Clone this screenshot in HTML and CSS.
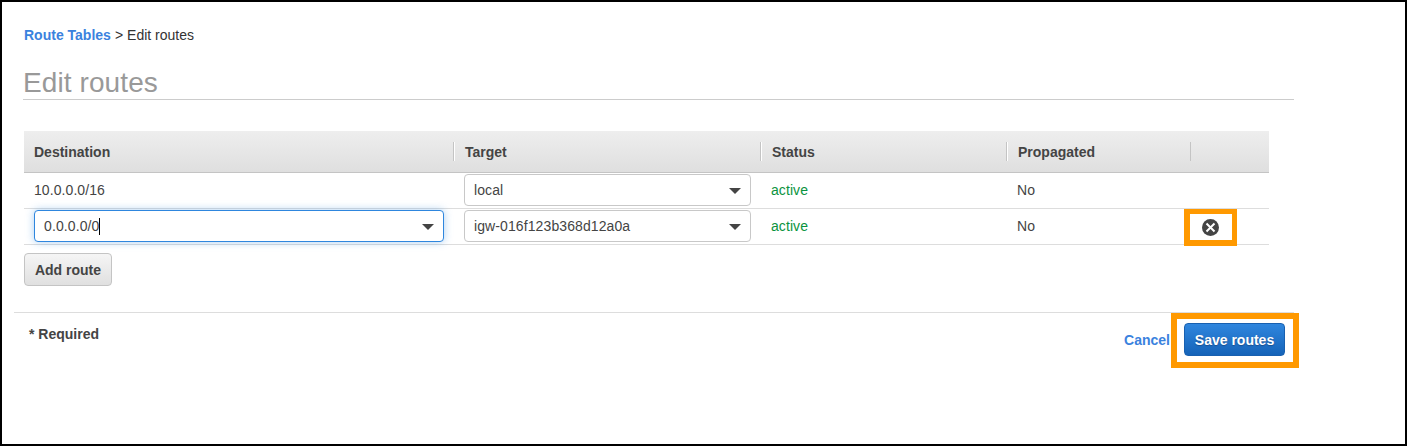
FILE: index.html
```html
<!DOCTYPE html>
<html lang="en">
<head>
<meta charset="utf-8">
<title>Edit routes</title>
<link rel="stylesheet" href="styles.css">
</head>
<body>
<main class="page">
  <nav class="breadcrumb"><a class="link crumb-link">Route Tables</a><span class="crumb-sep">&gt;</span><span class="crumb-current">Edit routes</span></nav>
  <h1 class="title"><span class="title-text">Edit routes</span></h1>
  <section class="routes">
    <div class="row head">
      <div class="cell"><span>Destination</span></div>
      <div class="cell split"><span>Target</span></div>
      <div class="cell split"><span>Status</span></div>
      <div class="cell split"><span>Propagated</span></div>
      <div class="cell split last"></div>
    </div>
    <div class="row">
      <div class="cell value"><span>10.0.0.0/16</span></div>
      <div class="cell"><div class="select"><span>local</span><svg class="caret" viewBox="0 0 12 6"><path d="M0 0h12L6 6z"/></svg></div></div>
      <div class="cell value active"><span>active</span></div>
      <div class="cell value"><span>No</span></div>
      <div class="cell"></div>
    </div>
    <div class="row">
      <div class="cell"><div class="select focused"><span class="typed">0.0.0.0/0</span><svg class="caret" viewBox="0 0 12 6"><path d="M0 0h12L6 6z"/></svg></div></div>
      <div class="cell"><div class="select"><span>igw-016f123b368d12a0a</span><svg class="caret" viewBox="0 0 12 6"><path d="M0 0h12L6 6z"/></svg></div></div>
      <div class="cell value active"><span>active</span></div>
      <div class="cell value"><span>No</span></div>
      <div class="cell remove">
        <svg class="remove-icon" viewBox="0 0 17 17"><circle cx="8.5" cy="8.5" r="8.5"/><path d="M4.5 4.5l8 8M12.5 4.5l-8 8"/></svg>
        <div class="mark mark-remove"></div>
      </div>
    </div>
  </section>
  <button class="button add"><span>Add route</span></button>
  <footer class="footer">
    <span class="required">* Required</span>
    <div class="actions">
      <a class="link cancel">Cancel</a>
      <div class="save-wrap">
        <button class="button save"><span>Save routes</span></button>
        <div class="mark mark-save"></div>
      </div>
    </div>
  </footer>
</main>
</body>
</html>
```
FILE: styles.css
```css
* { box-sizing: border-box; }
body {
  margin: 0;
  background: #fff;
  color: #444;
  font: 14px/20px "Liberation Sans", Arial, sans-serif;
}
.page {
  height: 446px;
  border: 2px solid #000;
  padding: 23px 0 0 12px;
}
.link { color: #3a82de; font-weight: bold; }
.breadcrumb { display: flex; gap: 4px; margin-left: 10px; color: #333; }
.title {
  width: 1271px;
  height: 40px;
  margin: 15px 0 0 9px;
  border-bottom: 1px solid #ccc;
  color: #999;
  font-size: 28px;
  font-weight: normal;
  line-height: 45px;
}
.title-text { letter-spacing: 0.1px; }
.routes { width: 1245px; margin: 31px 0 0 10px; }
.row {
  display: grid;
  grid-template-columns: 430px 307px 246px 184px 78px;
  height: 36px;
  border-bottom: 1px solid #ddd;
}
.cell { display: flex; align-items: center; padding-left: 10px; }
.value { padding-bottom: 2px; letter-spacing: 0.08px; }
.head {
  height: 42px;
  border-color: #c4c4c4;
  background: linear-gradient(#eee, #dfdfdf);
  font-weight: bold;
}
.split { position: relative; padding-left: 11px; }
.split::before {
  content: "";
  position: absolute;
  left: -1px;
  top: 11px;
  width: 2px;
  height: 19px;
  background: linear-gradient(90deg, #c4c4c4 50%, #fff 50%);
}
.last::before { width: 1px; background: #c4c4c4; }
.active { color: #0a9340; }
.select {
  display: flex;
  align-items: center;
  justify-content: space-between;
  width: 287px;
  height: 32px;
  margin-top: -1px;
  padding: 0 9px;
  border: 1px solid #c8c8c8;
  border-radius: 4px;
  background: #fff;
  letter-spacing: 0.1px;
}
.focused {
  width: 410px;
  border-color: #2e86de;
  box-shadow: 0 0 9px rgba(46, 134, 222, 0.4);
}
.typed { height: 17px; line-height: 17px; border-right: 1px solid #000; }
.caret { width: 12px; height: 6px; margin-top: 2px; fill: #444; }
.remove { position: relative; padding-left: 11px; }
.remove-icon { width: 17px; height: 17px; margin-top: 1px; fill: #444; }
.remove-icon path { stroke: #fff; stroke-width: 2; }
.mark { position: absolute; border: 6px solid #ff9900; }
.mark-remove {
  left: -7px;
  top: 0;
  width: 53px;
  height: 37px;
  border-width: 5px 5px 6px 6px;
}
.button {
  display: block;
  height: 33px;
  padding: 2px 0 0;
  border: 1px solid #c4c4c4;
  border-radius: 4px;
  font: bold 14px/29px "Liberation Sans", Arial, sans-serif;
}
.add {
  width: 88px;
  margin: 8px 0 0 10px;
  background: linear-gradient(#f5f5f5, #e0e0e0);
  color: #444;
}
.footer {
  display: flex;
  justify-content: space-between;
  width: 1280px;
  margin-top: 26px;
  padding: 10px 9px 0 15px;
  border-top: 1px solid #ddd;
}
.required { margin-top: 1px; font-weight: bold; }
.actions { display: flex; gap: 14px; }
.cancel { line-height: 34px; }
.save-wrap { position: relative; }
.save {
  width: 101px;
  border-color: #1860b0;
  background: linear-gradient(#2f86de, #1563b8);
  color: #fff;
  text-shadow: 0 1px 1px #1a4f8f;
}
.mark-save { left: -13px; top: -10px; width: 128px; height: 55px; }
```
